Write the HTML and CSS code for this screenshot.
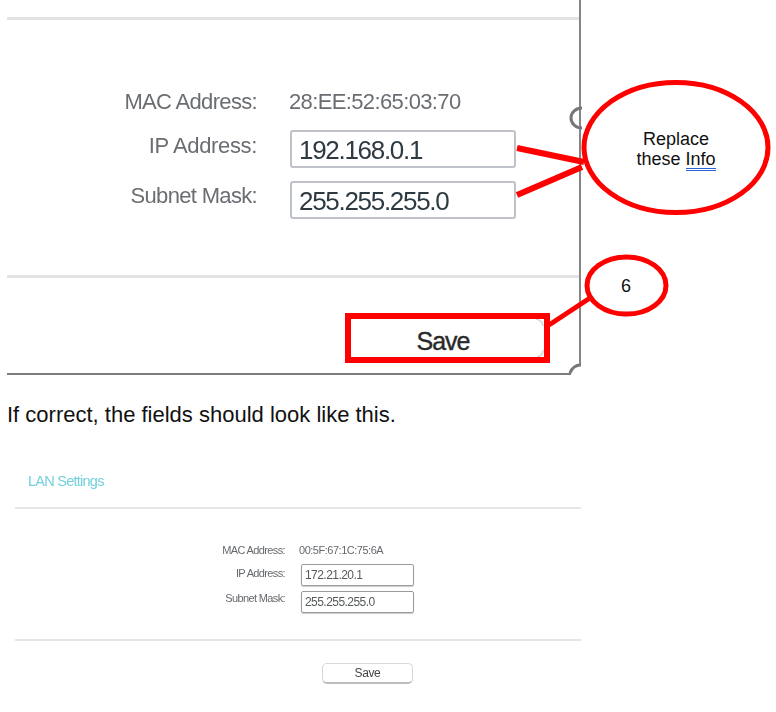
FILE: index.html
```html
<!DOCTYPE html>
<html lang="en">
<head>
<meta charset="utf-8">
<title>LAN Settings</title>
<link rel="stylesheet" href="styles.css">
</head>
<body>
<main class="page">
  <section class="annotated">
    <div class="big-panel">
      <div class="big-rule"></div>
      <div class="big-form">
        <span class="big-label">MAC Address:</span><span class="big-value">28:EE:52:65:03:70</span>
        <span class="big-label big-label-ip">IP Address:</span><span class="big-input">192.168.0.1</span>
        <span class="big-label big-label-mask">Subnet Mask:</span><span class="big-input">255.255.255.0</span>
      </div>
      <div class="big-rule big-rule-lower"></div>
      <div class="big-actions"><span class="big-save">Save</span></div>
    </div>
    <svg class="marks" width="776" height="380" viewBox="0 0 776 380" aria-hidden="true">
      <rect class="patch" x="571" y="366" width="12" height="10"/>
      <path class="notch" d="M582 108A11 10 0 0 0 582 128"/>
      <path class="notch" d="M570 373A11 11 0 0 1 581 365"/>
      <path class="button-edge" d="M536 319Q542 320 543 326M543 350Q543 356 537 357"/>
      <path class="callout-line" d="M517 148L584 162"/>
      <path class="callout-line" d="M517 195L582 167"/>
      <path class="callout-line callout-thin" d="M549 325L593 296"/>
      <rect class="callout" x="348" y="316" width="199" height="44"/>
      <ellipse class="callout" cx="676" cy="147.500" rx="92" ry="65"/>
      <ellipse class="callout" cx="626.500" cy="285.500" rx="39.500" ry="28.500"/>
    </svg>
    <p class="note note-big">Replace<br>these <span class="spell">Info</span></p>
    <p class="note note-small">6</p>
  </section>
  <p class="caption">If correct, the fields should look like this.</p>
  <section class="small-panel">
    <h2 class="small-title">LAN Settings</h2>
    <div class="small-rule"></div>
    <div class="small-form">
      <span class="small-label">MAC Address:</span><span class="small-value">00:5F:67:1C:75:6A</span>
      <span class="small-label">IP Address:</span><span class="small-input">172.21.20.1</span>
      <span class="small-label small-label-mask">Subnet Mask:</span><span class="small-input">255.255.255.0</span>
    </div>
    <div class="small-rule small-rule-lower"></div>
    <div class="small-actions"><span class="small-save">Save</span></div>
  </section>
</main>
</body>
</html>
```
FILE: styles.css
```css
* { box-sizing: border-box; }
html, body { margin: 0; background: #fff; }
body { font-family: "Liberation Sans", Arial, sans-serif; color: #111; }
.page { width: 776px; height: 712px; overflow: hidden; }

.annotated { position: relative; height: 375px; }
.big-panel {
  margin-left: 7px; width: 574px; height: 375px;
  border-right: 2px solid #858585; border-bottom: 2px solid #7b7b7b;
  padding-top: 17px;
}
.big-rule { height: 3px; background: #e3e3e3; }
.big-rule-lower { margin-top: 56px; }
.big-form {
  display: grid; grid-template-columns: 250px 226px; column-gap: 33px;
  grid-template-rows: 31px 38px 38px; row-gap: 13px;
  margin-top: 66px; align-items: center; filter: blur(.35px);
}
.big-label { text-align: right; font-size: 22px; letter-spacing: -.67px; color: #6a6e72; white-space: nowrap; }
.big-label-ip { position: relative; top: -3px; letter-spacing: -.35px; }
.big-label-mask { position: relative; top: -4px; }
.big-value { font-size: 22px; letter-spacing: -.63px; color: #6a6e72; margin-left: -1px; }
.big-input {
  height: 38px; padding: 2px 0 0 7px;
  border: 2px solid #bfc2c8; border-radius: 3px;
  font-size: 26px; letter-spacing: -1.300px; line-height: 32px; color: #2e3a42;
}
.big-actions { display: flex; justify-content: center; padding: 49px 0 0 300px; }
.big-save { font-size: 25px; line-height: 28px; letter-spacing: -1px; color: #2a2a2a; -webkit-text-stroke: .4px #2a2a2a; }

.marks { position: absolute; left: 0; top: 0; }
.patch { fill: #fff; }
.notch { fill: none; stroke: #777; stroke-width: 3; }
.button-edge { fill: none; stroke: #d4d4d4; stroke-width: 1.500; }
.callout { fill: #fff; stroke: #fe0000; stroke-width: 5; }
rect.callout { fill: none; stroke-width: 6; }
.callout-line { fill: none; stroke: #fe0000; stroke-width: 6; }
.callout-thin { stroke-width: 5; }
.note { position: absolute; margin: 0; text-align: center; font-size: 18px; line-height: 20px; color: #111; }
.note-big { left: 616px; top: 129px; width: 120px; }
.note-small { left: 606px; top: 276px; width: 40px; }
.spell { display: inline-block; line-height: 17px; border-bottom: 3px double #2a66d8; }

.caption { margin: 28px 0 0 7px; font-size: 22px; line-height: 24px; height: 24px; color: #111; }

.small-panel { margin: 0 0 0 15px; width: 566px; filter: blur(.4px); }
.small-title { margin: 44px 0 0 13px; font-size: 14.500px; line-height: 20px; font-weight: 400; letter-spacing: -.75px; color: #72d0dc; }
.small-rule { height: 2px; margin-top: 16px; background: #e6e6e6; }
.small-rule-lower { margin-top: 28px; }
.small-form {
  display: grid; grid-template-columns: 270px 113px; column-gap: 16px;
  grid-template-rows: 14px 22px 22px; row-gap: 5px; margin-top: 34px; align-items: center;
}
.small-label { text-align: right; font-size: 11px; letter-spacing: -.63px; color: #666a6e; white-space: nowrap; }
.small-label-mask { position: relative; top: -2px; }
.small-value { font-size: 11px; letter-spacing: -.48px; color: #666a6e; margin-left: -2px; }
.small-input {
  height: 22px; padding-left: 3px; border: 1px solid #9a9a9a; border-radius: 2px;
  box-shadow: 0 1px 1px #ccc; position: relative; top: 2px;
  font-size: 12px; line-height: 20px; letter-spacing: -.55px; color: #55595c;
}
.small-actions { display: flex; padding: 22px 0 0 307px; }
.small-save {
  width: 91px; height: 21px; border: 1px solid #d8d8d8; border-bottom: 2px solid #bdbdbd; border-radius: 5px;
  text-align: center; font-size: 12px; line-height: 19px; letter-spacing: -.4px; color: #444;
}
```
